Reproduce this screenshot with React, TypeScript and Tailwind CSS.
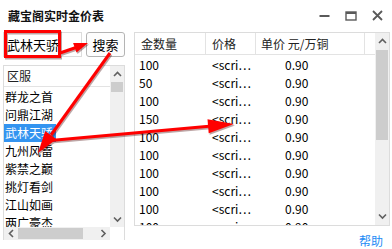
import React from "react";

const Chevron = ({ dir, className }: { dir: "up" | "down" | "left" | "right"; className?: string }) => {
  const pts: Record<string, string> = {
    up: "1,5 4.5,1.5 8,5",
    down: "1,1.5 4.5,5 8,1.5",
    left: "5,1 1.5,4.5 5,8",
    right: "1.5,1 5,4.5 1.5,8",
  };
  const vert = dir === "up" || dir === "down";
  return (
    <svg
      width={vert ? 9 : 7}
      height={vert ? 7 : 9}
      viewBox={vert ? "0 0 9 7" : "0 0 7 9"}
      className={className}
    >
      <polyline points={pts[dir]} fill="none" stroke="#606060" strokeWidth="1.6" />
    </svg>
  );
};

const servers = ["群龙之首", "问鼎江湖", "武林天骄", "九州风雷", "紫禁之巅", "挑灯看剑", "江山如画", "两广豪杰"];
const rows = ["100", "50", "100", "150", "100", "100", "100", "100", "100", "100"];

export default function App() {
  return (
    <div className="relative w-[392px] h-[249px] overflow-hidden bg-white text-[#000] font-['Noto_Sans_CJK_SC','Microsoft_YaHei',sans-serif] text-[12px]">
      {/* title bar */}
      <div className="flex h-[31px] items-center justify-between pl-[8px] pr-[9px]">
        <div className="text-[12px] font-bold leading-[16px] text-[#111]">藏宝阁实时金价表</div>
        <div className="flex items-center gap-[15px]">
          <svg width="11" height="10" viewBox="0 0 11 10">
            <rect x="0.5" y="4" width="10" height="2" fill="#5a5a5a" />
          </svg>
          <svg width="12" height="10" viewBox="0 0 12 10">
            <rect x="1" y="1" width="10" height="8" fill="none" stroke="#5a5a5a" strokeWidth="1.4" />
            <rect x="1" y="1" width="10" height="2" fill="#5a5a5a" />
          </svg>
          <svg width="11" height="11" viewBox="0 0 11 11">
            <path d="M1 1 L10 10 M10 1 L1 10" stroke="#5a5a5a" strokeWidth="1.8" />
          </svg>
        </div>
      </div>

      {/* main */}
      <div className="flex pl-[3px] pt-[1px]">
        {/* left column */}
        <div className="flex w-[123px] flex-col">
          <div className="flex h-[25px]">
            <div className="flex w-[79px] items-center border border-[#dcdcdc] pl-[3px] text-[13px] leading-[16px]">
              武林天骄
            </div>
            <div className="ml-[4px] flex w-[39px] items-center justify-center rounded-[3px] border border-[#b4b4b4] bg-[#fdfdfd] text-[13px] leading-[16px]">
              搜索
            </div>
          </div>
          <div className="mt-[8px] flex h-[175px] w-[122px] flex-col border border-[#dcdcdc]">
            <div className="flex h-[161px]">
              <div className="flex-1 overflow-hidden">
                <div className="flex h-[21px] items-center border-b border-[#e3e3e3] pl-[3px] leading-[16px] text-[#222]">
                  区服
                </div>
                <div className="pt-[1px]">
                  {servers.map((s, i) => (
                    <div key={s} className="flex h-[18px] items-center">
                      <span
                        className={
                          i === 2
                            ? "bg-[#3394f0] pl-[1px] pr-[3px] leading-[18px] text-white"
                            : "pl-[1px] leading-[18px]"
                        }
                      >
                        {s}
                      </span>
                    </div>
                  ))}
                </div>
              </div>
              <div className="flex w-[14px] flex-col bg-[#f0f0f0]">
                <div className="flex h-[16px] items-center justify-center">
                  <Chevron dir="up" />
                </div>
                <div className="mx-[1px] h-[10px] bg-[#cdcdcd]" />
                <div className="flex-1" />
                <div className="flex h-[16px] items-center justify-center">
                  <Chevron dir="down" />
                </div>
              </div>
            </div>
            <div className="flex flex-1">
              <div className="flex flex-1 items-center bg-[#f0f0f0]">
                <div className="flex w-[14px] justify-center">
                  <Chevron dir="left" />
                </div>
                <div className="my-[1px] h-[11px] w-[65px] bg-[#cdcdcd]" />
                <div className="flex-1" />
                <div className="flex w-[14px] justify-center">
                  <Chevron dir="right" />
                </div>
              </div>
              <div className="w-[14px] bg-white" />
            </div>
          </div>
        </div>

        {/* right column */}
        <div className="ml-[8px] flex w-[256px] flex-col">
          <div className="flex h-[194px] border border-[#dcdcdc]">
            <div className="flex-1 overflow-hidden">
              <div className="flex h-[22px] items-center border-b border-[#e3e3e3] leading-[16px] text-[#222]">
                <div className="flex h-full w-[71px] items-center border-r border-[#e3e3e3] pl-[6px]">金数量</div>
                <div className="flex h-full w-[50px] items-center border-r border-[#e3e3e3] pl-[6px]">价格</div>
                <div className="flex h-full w-[109px] items-center border-r border-[#e3e3e3] pl-[5px]">单价 元/万铜</div>
              </div>
              <div className="pt-[1px]">
                {rows.map((r, i) => (
                  <div key={i} className="flex h-[18px] items-center leading-[18px]">
                    <div className="w-[71px] pl-[4px]">{r}</div>
                    <div className="w-[50px] pl-[6px]">&lt;scri…</div>
                    <div className="w-[109px] pl-[29px]">0.90</div>
                  </div>
                ))}
              </div>
            </div>
            <div className="flex w-[14px] flex-col bg-[#f0f0f0]">
              <div className="flex h-[17px] items-center justify-center">
                <Chevron dir="up" />
              </div>
              <div className="mx-[1px] h-[90px] bg-[#cdcdcd]" />
              <div className="flex-1" />
              <div className="flex h-[17px] items-center justify-center">
                <Chevron dir="down" />
              </div>
            </div>
          </div>
          <div className="mt-[7px] flex justify-end pr-[7px]">
            <span className="text-[12px] leading-[16px] text-[#1e8cf5]">帮助</span>
          </div>
        </div>
      </div>

      {/* red annotations */}
      <svg className="pointer-events-none absolute left-0 top-0" width="392" height="249" viewBox="0 0 392 249">
        <g opacity="0.35" transform="translate(1,1.5)">
          <rect x="5.5" y="31.5" width="54" height="25" fill="none" stroke="#400" strokeWidth="3" />
          <line x1="60" y1="53" x2="76" y2="47.5" stroke="#400" strokeWidth="3" />
          <polygon points="88,43 76.5,52.4 73.1,43" fill="#400" />
          <line x1="110" y1="53" x2="51" y2="135" stroke="#400" strokeWidth="3" />
          <polygon points="38,153 56.5,139.2 45.2,131" fill="#400" />
          <line x1="45" y1="141" x2="209" y2="126.3" stroke="#400" strokeWidth="3" />
          <polygon points="234,124 208.7,133.3 207.5,119.3" fill="#400" />
        </g>
        <rect x="5.5" y="31.5" width="54" height="25" fill="none" stroke="#ff0000" strokeWidth="3" />
        <line x1="60" y1="53" x2="76" y2="47.5" stroke="#ff0000" strokeWidth="3" />
        <polygon points="88,43 76.5,52.4 73.1,43" fill="#ff0000" />
        <line x1="110" y1="53" x2="51" y2="135" stroke="#ff0000" strokeWidth="3" />
        <polygon points="38,153 56.5,139.2 45.2,131" fill="#ff0000" />
        <line x1="45" y1="141" x2="209" y2="126.3" stroke="#ff0000" strokeWidth="3" />
        <polygon points="234,124 208.7,133.3 207.5,119.3" fill="#ff0000" />
      </svg>
    </div>
  );
}
